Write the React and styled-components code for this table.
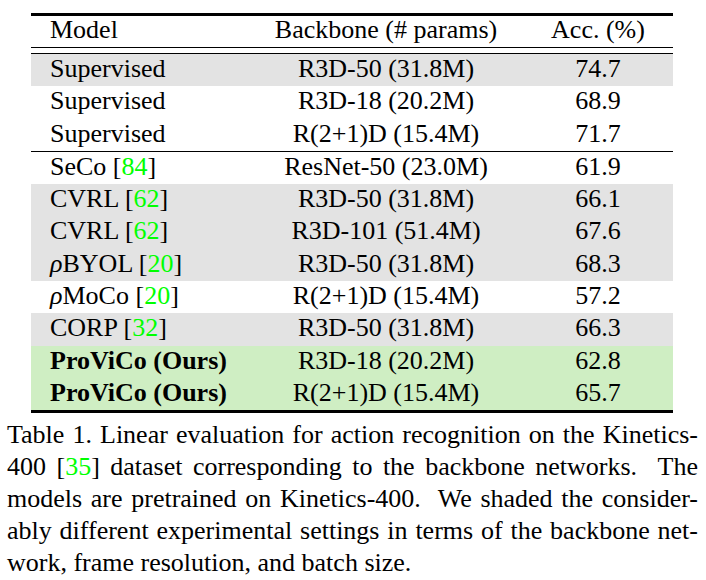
import React from "react";
import styled, { createGlobalStyle } from "styled-components";

const serif = `"Liberation Serif", "Times New Roman", Times, "DejaVu Serif", serif`;

const GlobalStyle = createGlobalStyle`
  html, body {
    margin: 0;
    padding: 0;
    background: #ffffff;
    font-family: ${serif};
    color: #000000;
  }
`;

const Figure = styled.div`
  width: 706px;
  padding-top: 13px;
  font-family: ${serif};
`;

const Table = styled.div`
  width: 642px;
  margin-left: 31px;
  border-top: 3px solid #000;
  border-bottom: 3px solid #000;
  font-family: ${serif};
  font-size: 26px;
`;

const Grid = styled.div`
  display: grid;
  grid-template-columns: 218px 274px 150px;
`;

const HeaderRow = styled(Grid)`
  height: 31px;
  line-height: 27px;
  border-bottom: 1px solid #000;
  margin-bottom: 5px;
`;

const shades = {
  grey: "#e3e3e3",
  green: "#cfeec3",
};

const Body = styled.div`
  border-top: 1px solid #000;
`;

const Row = styled(Grid)`
  height: 32.3px;
  line-height: 30px;
  background: ${(p) => shades[p.$shade] || "transparent"};
  border-top: ${(p) => (p.$rule ? "1px solid #000" : "none")};
`;

const Cell = styled.div`
  white-space: nowrap;
  font-family: ${serif};
  text-align: ${(p) => p.$align || "center"};
  padding-left: ${(p) => (p.$align === "left" ? "19px" : "0")};
  font-weight: ${(p) => (p.$bold ? "bold" : "normal")};
`;

const Cite = styled.span`
  color: #00ff00;
`;

const Rho = styled.i`
  font-style: italic;
`;

const Caption = styled.div`
  width: 691px;
  margin: 6px 0 0 7px;
  font-family: ${serif};
  font-size: 26px;
  line-height: 32px;
`;

const CaptionLine = styled.div`
  white-space: nowrap;
  text-align: justify;
  text-align-last: ${(p) => (p.$last ? "left" : "justify")};
`;

const groups = [
  [
    { model: "Supervised", backbone: "R3D-50 (31.8M)", acc: "74.7", shade: "grey" },
    { model: "Supervised", backbone: "R3D-18 (20.2M)", acc: "68.9" },
    { model: "Supervised", backbone: "R(2+1)D (15.4M)", acc: "71.7" },
  ],
  [
    { model: "SeCo", cite: "84", backbone: "ResNet-50 (23.0M)", acc: "61.9" },
    { model: "CVRL", cite: "62", backbone: "R3D-50 (31.8M)", acc: "66.1", shade: "grey" },
    { model: "CVRL", cite: "62", backbone: "R3D-101 (51.4M)", acc: "67.6", shade: "grey" },
    { model: "BYOL", rho: true, cite: "20", backbone: "R3D-50 (31.8M)", acc: "68.3", shade: "grey" },
    { model: "MoCo", rho: true, cite: "20", backbone: "R(2+1)D (15.4M)", acc: "57.2" },
    { model: "CORP", cite: "32", backbone: "R3D-50 (31.8M)", acc: "66.3", shade: "grey" },
    { model: "ProViCo (Ours)", bold: true, backbone: "R3D-18 (20.2M)", acc: "62.8", shade: "green" },
    { model: "ProViCo (Ours)", bold: true, backbone: "R(2+1)D (15.4M)", acc: "65.7", shade: "green" },
  ],
];

function ModelName({ row }) {
  return (
    <Cell $align="left" $bold={row.bold}>
      {row.rho && <Rho>ρ</Rho>}
      {row.model}
      {row.cite && (
        <>
          {" "}[<Cite>{row.cite}</Cite>]
        </>
      )}
    </Cell>
  );
}

export default function App() {
  return (
    <>
      <GlobalStyle />
      <Figure>
        <Table>
          <HeaderRow>
            <Cell $align="left">Model</Cell>
            <Cell>Backbone (# params)</Cell>
            <Cell>Acc. (%)</Cell>
          </HeaderRow>
          <Body>
            {groups.map((group, gi) =>
              group.map((row, ri) => (
                <Row key={`${gi}-${ri}`} $shade={row.shade} $rule={gi > 0 && ri === 0}>
                  <ModelName row={row} />
                  <Cell>{row.backbone}</Cell>
                  <Cell>{row.acc}</Cell>
                </Row>
              ))
            )}
          </Body>
        </Table>
        <Caption>
          <CaptionLine>Table 1. Linear evaluation for action recognition on the Kinetics-</CaptionLine>
          <CaptionLine>
            400 [<Cite>35</Cite>] dataset corresponding to the backbone networks.&nbsp; The
          </CaptionLine>
          <CaptionLine>models are pretrained on Kinetics-400.&nbsp; We shaded the consider-</CaptionLine>
          <CaptionLine>ably different experimental settings in terms of the backbone net-</CaptionLine>
          <CaptionLine $last>work, frame resolution, and batch size.</CaptionLine>
        </Caption>
      </Figure>
    </>
  );
}
